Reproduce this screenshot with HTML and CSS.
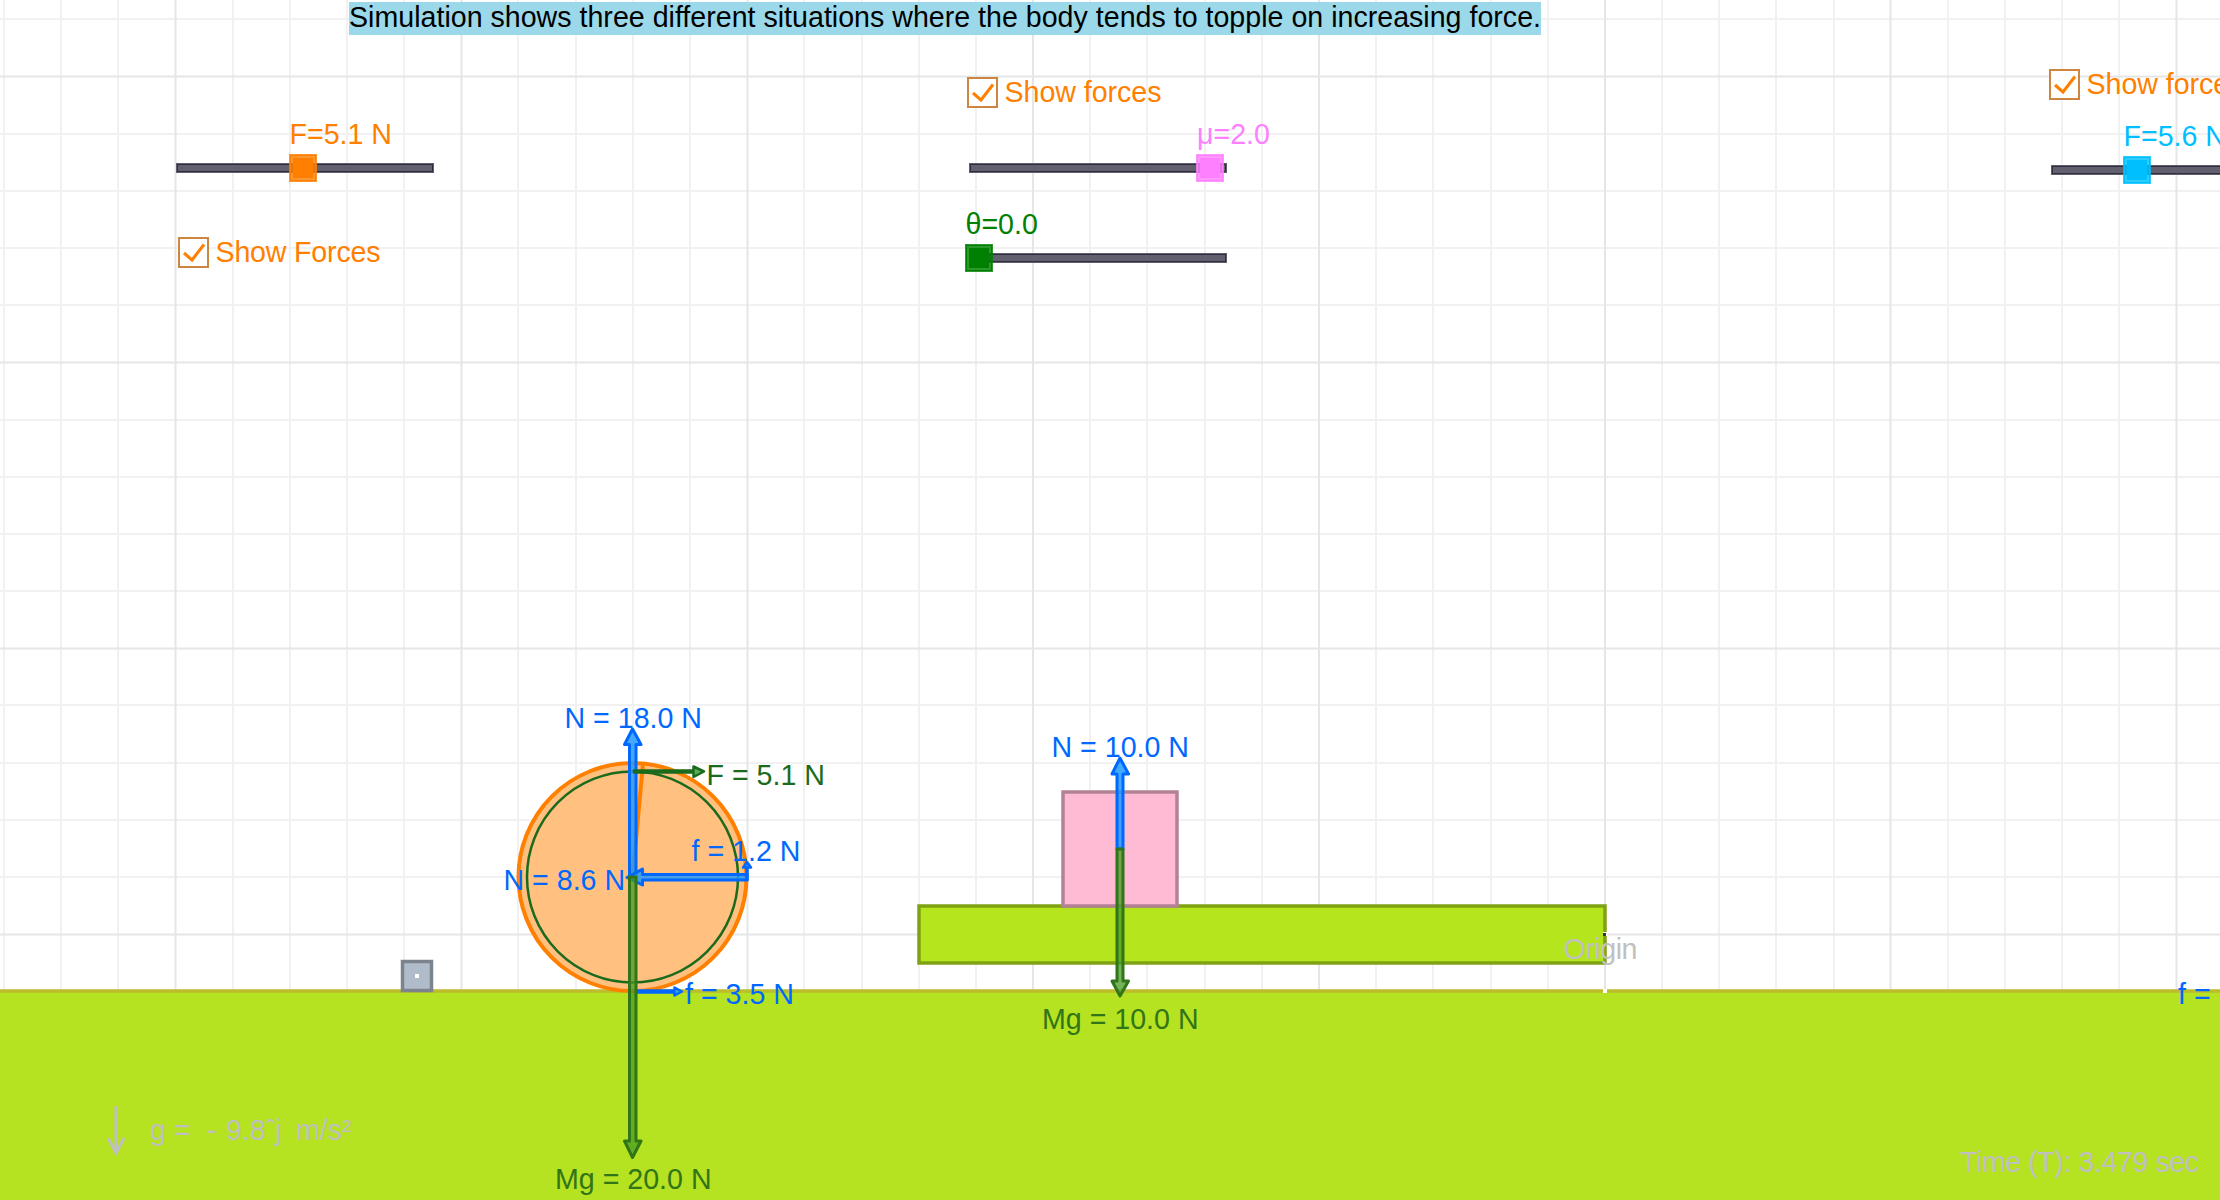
FILE: index.html
```html
<!DOCTYPE html>
<html lang="en">
<head>
<meta charset="utf-8">
<title>Toppling simulation</title>
<link rel="stylesheet" href="styles.css">
</head>
<body>
<svg class="stage" viewBox="0 0 2220 1200" width="2220" height="1200">
  <!-- background grid -->
  <path class="grid-minor" d="M4 0V1200M61 0V1200M118 0V1200M233 0V1200M290 0V1200M347 0V1200M404 0V1200M518 0V1200M576 0V1200M633 0V1200M690 0V1200M804 0V1200M862 0V1200M919 0V1200M976 0V1200M1090 0V1200M1147 0V1200M1205 0V1200M1262 0V1200M1376 0V1200M1433 0V1200M1491 0V1200M1548 0V1200M1662 0V1200M1719 0V1200M1776 0V1200M1834 0V1200M1948 0V1200M2005 0V1200M2062 0V1200M2119 0V1200"/>
  <path class="grid-minor" d="M0 19H2220M0 134H2220M0 191H2220M0 248H2220M0 305H2220M0 420H2220M0 477H2220M0 534H2220M0 591H2220M0 705H2220M0 763H2220M0 820H2220M0 877H2220"/>
  <path class="grid-major" d="M175.500 0V1200M461.500 0V1200M747.500 0V1200M1033 0V1200M1319 0V1200M1605 0V1200M1890.500 0V1200M2176.500 0V1200M0 76.500H2220M0 362.500H2220M0 648.500H2220M0 934.500H2220"/>

  <!-- ground -->
  <rect class="ground" x="-10" y="991" width="2240" height="230"/>

  <!-- caption -->
  <rect class="caption-bg" x="349" y="2" width="1192" height="33"/>
  <text class="label caption" x="349" y="27" textLength="1192">Simulation shows three different situations where the body tends to topple on increasing force.</text>

  <!-- sliders -->
  <g class="track">
    <rect x="176" y="163" width="258" height="10"/>
    <rect x="969" y="163" width="258" height="10"/>
    <rect x="969" y="253" width="258" height="10"/>
    <rect x="2051" y="165" width="258" height="10"/>
  </g>
  <g class="track-line">
    <rect x="177.500" y="164.500" width="255" height="7"/>
    <rect x="970.500" y="164.500" width="255" height="7"/>
    <rect x="970.500" y="254.500" width="255" height="7"/>
    <rect x="2052.500" y="166.500" width="255" height="7"/>
  </g>
  <g class="orange knob" transform="translate(289 154)"><rect class="halo" width="28" height="28"/><rect class="rim" x="1.500" y="1.500" width="25" height="25"/><rect x="4" y="4" width="20" height="20"/></g>
  <g class="pink knob" transform="translate(1196 154)"><rect class="halo" width="28" height="28"/><rect class="rim" x="1.500" y="1.500" width="25" height="25"/><rect x="4" y="4" width="20" height="20"/></g>
  <g class="green knob" transform="translate(965 244)"><rect class="halo" width="28" height="28"/><rect class="rim" x="1.500" y="1.500" width="25" height="25"/><rect x="4" y="4" width="20" height="20"/></g>
  <g class="cyan knob" transform="translate(2123 156)"><rect class="halo" width="28" height="28"/><rect class="rim" x="1.500" y="1.500" width="25" height="25"/><rect x="4" y="4" width="20" height="20"/></g>
  <text class="label orange" x="289.500" y="144">F=5.1 N</text>
  <text class="label pink" x="1197" y="144">μ=2.0</text>
  <text class="label green" x="965.500" y="234">θ=0.0</text>
  <text class="label cyan" x="2123.500" y="146">F=5.6 N</text>

  <!-- checkboxes -->
  <g class="check" transform="translate(178 237)"><rect x="1" y="1" width="29" height="29"/><path d="M6 16L14 23L26 7.500"/></g>
  <g class="check" transform="translate(967 77)"><rect x="1" y="1" width="29" height="29"/><path d="M6 16L14 23L26 7.500"/></g>
  <g class="check" transform="translate(2049 69)"><rect x="1" y="1" width="29" height="29"/><path d="M6 16L14 23L26 7.500"/></g>
  <text class="label orange" x="215.500" y="262" textLength="165">Show Forces</text>
  <text class="label orange" x="1004.500" y="102" textLength="157">Show forces</text>
  <text class="label orange" x="2086.500" y="94" textLength="157">Show forces</text>

  <!-- small pinned block -->
  <rect class="block" x="402.500" y="961.500" width="29" height="29"/>
  <rect class="pin" x="415" y="974" width="4" height="4"/>

  <!-- plank and box -->
  <rect class="plank" x="919" y="906" width="686" height="57"/>
  <rect class="box" x="1063" y="792" width="114" height="114"/>
  <rect class="pin" x="1603" y="932" width="4" height="4"/>
  <rect class="pin-dark" x="1603" y="933" width="3" height="3"/>
  <rect class="pin" x="1603" y="989" width="4" height="4"/>
  <text class="label muted" x="1563.500" y="959" textLength="74">Origin</text>

  <!-- disc -->
  <circle class="disc" cx="632.500" cy="877" r="114"/>
  <path class="spoke" d="M632.500 877L643 764"/>
  <circle class="inner-ring" cx="632.500" cy="877" r="105.500"/>

  <!-- force vectors -->
  <path class="vec blue" d="M629.500 877V744.500H624.500L632.500 729L641 744.500H636V877Z"/>
  <path class="vec forest thin" d="M634 770.500H693.500V766.500L704 771.500L693.500 777V772.500H634Z"/>
  <path class="vec blue" d="M747 874.500H642.500V869L627 877.500L642.500 885V880H747Z"/>
  <path class="vec blue thin" d="M746.500 880V867.500H743L747 862L751 867.500H747.500V880Z"/>
  <path class="vec blue thin" d="M636 990.500H674.500V987.500L682 991.500L674.500 995.500V992.500H636Z"/>
  <path class="vec leaf" d="M629.500 877V1141H624.500L632.500 1157.500L641 1141H636V877Z"/>
  <path class="vec blue" d="M1117 849V774H1112L1120 758L1128.500 774H1123V849Z"/>
  <path class="vec leaf" d="M1117 849V981H1112L1120 996L1128.500 981H1123V849Z"/>

  <!-- force labels -->
  <g class="label blue-text">
    <text x="564.500" y="728">N = 18.0 N</text>
    <text x="691.500" y="861">f = 1.2 N</text>
    <text x="503.500" y="890">N = 8.6 N</text>
    <text x="685" y="1004">f = 3.5 N</text>
    <text x="1051.500" y="757">N = 10.0 N</text>
    <text x="2178" y="1004">f =</text>
  </g>
  <text class="label forest-text" x="706.500" y="785">F = 5.1 N</text>
  <text class="label leaf-text" x="555" y="1189">Mg = 20.0 N</text>
  <text class="label leaf-text" x="1042" y="1029">Mg = 10.0 N</text>

  <!-- gravity and time readouts -->
  <path class="gravity" d="M116 1106V1153M108 1138L116 1153L124 1138"/>
  <g class="label muted">
    <text x="150" y="1140">g =</text>
    <text x="207" y="1140">-</text>
    <text x="226" y="1140">9.8ˆj</text>
    <text x="296" y="1140">m/s²</text>
    <text x="1960" y="1172" textLength="239">Time (T): 3.479 sec</text>
  </g>
</svg>
</body>
</html>
```
FILE: styles.css
```css
body { margin: 0; background: #fff; overflow: hidden; }
.stage { display: block; }
.grid-minor { stroke: #f1f1f1; stroke-width: 2; shape-rendering: crispEdges; }
.grid-major { stroke: #e6e6e6; stroke-width: 2; }
.ground { fill: #b5e221; stroke: #bcbc2c; stroke-width: 3.5; }
.label { font-family: "Liberation Sans", Arial, sans-serif; font-size: 28.6px; }
.caption-bg { fill: #9bd9ea; }
.caption { fill: #000; }
.track { fill: #625f6e; }
.track-line { fill: none; stroke: #2f2d40; stroke-width: 1; }
.orange { fill: #ff8000; }
.pink { fill: #ff80ff; }
.green { fill: #008000; }
.cyan { fill: #00bfff; }
.halo { opacity: .82; }
.rim { fill: none; }
.orange .rim { stroke: #ff8000; }
.pink .rim { stroke: #ff80ff; }
.green .rim { stroke: #008000; }
.cyan .rim { stroke: #00bfff; }
.check rect { fill: #fff; stroke: #cd853f; stroke-width: 2; }
.check path { fill: none; stroke: #ff8000; stroke-width: 3; }
.block { fill: #b0bcca; stroke: #7b848d; stroke-width: 3.5; }
.pin { fill: #fff; }
.pin-dark { fill: #333; }
.plank { fill: #b5e61d; stroke: #7fa114; stroke-width: 3.5; }
.box { fill: #ffbbd3; stroke: #b38294; stroke-width: 3.5; }
.disc { fill: #ffc080; stroke: #ff8000; stroke-width: 4; }
.spoke { stroke: #ff8000; stroke-width: 4; }
.inner-ring { fill: none; stroke: #1c6b1c; stroke-width: 2.5; }
.vec { stroke-width: 3; stroke-linejoin: round; }
.thin { stroke-width: 2.5; }
.blue { fill: rgba(26, 153, 255, .82); stroke: #0068ff; }
.forest { fill: #55ad55; stroke: #1c6b1c; }
.leaf { fill: rgba(68, 155, 34, .75); stroke: #317519; }
.blue-text { fill: #0068ff; }
.forest-text { fill: #1c6b1c; }
.leaf-text { fill: #317519; }
.gravity { fill: none; stroke: #c0c0c0; stroke-width: 3; }
.muted { fill: #c0c0c0; }
```
